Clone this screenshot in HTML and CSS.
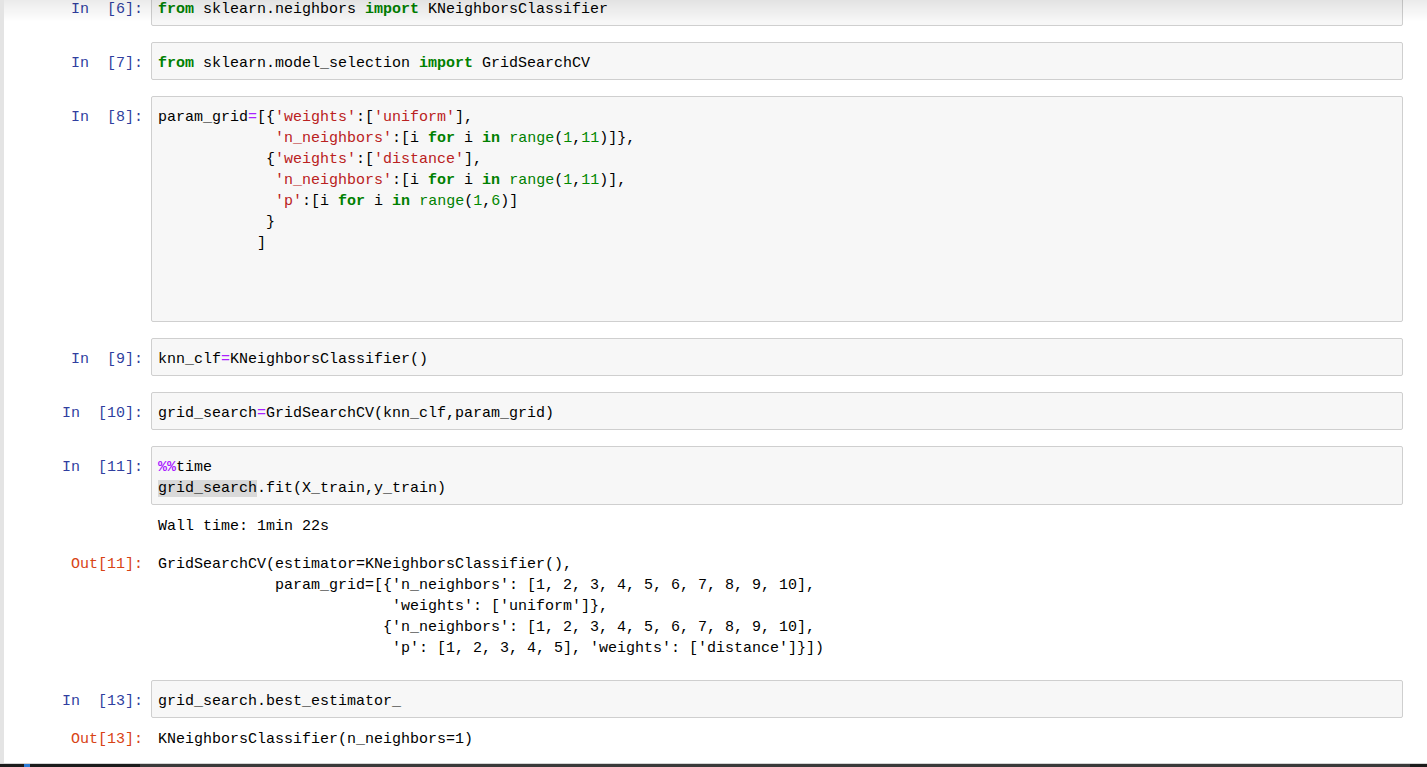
FILE: index.html
```html
<!DOCTYPE html>
<html lang="en">
<head>
    <meta charset="UTF-8">
    <title>knn grid search - Jupyter Notebook</title>
    <link rel="stylesheet" href="styles.css">
</head>
<body>
    <div class="notebook">
        <div class="cell first">
            <div class="row">
                <div class="prompt in">In  [6]:</div>
                <div class="input">
                    <pre class="line"><span class="kw">from</span> sklearn.neighbors <span class="kw">import</span> KNeighborsClassifier</pre>
                </div>
            </div>
        </div>

        <div class="cell">
            <div class="row">
                <div class="prompt in">In  [7]:</div>
                <div class="input">
                    <pre class="line"><span class="kw">from</span> sklearn.model_selection <span class="kw">import</span> GridSearchCV</pre>
                </div>
            </div>
        </div>

        <div class="cell">
            <div class="row">
                <div class="prompt in">In  [8]:</div>
                <div class="input tall">
                    <pre class="line">param_grid<span class="op">=</span>[{<span class="str">'weights'</span>:[<span class="str">'uniform'</span>],</pre>
                    <pre class="line">             <span class="str">'n_neighbors'</span>:[i <span class="kw">for</span> i <span class="kw">in</span> <span class="bi">range</span>(<span class="num">1</span>,<span class="num">11</span>)]},</pre>
                    <pre class="line">            {<span class="str">'weights'</span>:[<span class="str">'distance'</span>],</pre>
                    <pre class="line">             <span class="str">'n_neighbors'</span>:[i <span class="kw">for</span> i <span class="kw">in</span> <span class="bi">range</span>(<span class="num">1</span>,<span class="num">11</span>)],</pre>
                    <pre class="line">             <span class="str">'p'</span>:[i <span class="kw">for</span> i <span class="kw">in</span> <span class="bi">range</span>(<span class="num">1</span>,<span class="num">6</span>)]</pre>
                    <pre class="line">            }</pre>
                    <pre class="line">           ]</pre>
                    <pre class="line blank"></pre>
                    <pre class="line blank"></pre>
                    <pre class="line blank"></pre>
                </div>
            </div>
        </div>

        <div class="cell">
            <div class="row">
                <div class="prompt in">In  [9]:</div>
                <div class="input">
                    <pre class="line">knn_clf<span class="op">=</span>KNeighborsClassifier()</pre>
                </div>
            </div>
        </div>

        <div class="cell">
            <div class="row">
                <div class="prompt in">In  [10]:</div>
                <div class="input">
                    <pre class="line">grid_search<span class="op">=</span>GridSearchCV(knn_clf,param_grid)</pre>
                </div>
            </div>
        </div>

        <div class="cell with-output">
            <div class="row">
                <div class="prompt in">In  [11]:</div>
                <div class="input">
                    <pre class="line"><span class="magic">%%</span>time</pre>
                    <pre class="line"><span class="hl">grid_search</span>.fit(X_train,y_train)</pre>
                </div>
            </div>
            <div class="row output">
                <div class="prompt"></div>
                <div class="result">
                    <pre class="line">Wall time: 1min 22s</pre>
                </div>
            </div>
            <div class="row output next">
                <div class="prompt out">Out[11]:</div>
                <div class="result">
                    <pre class="line">GridSearchCV(estimator=KNeighborsClassifier(),</pre>
                    <pre class="line">             param_grid=[{'n_neighbors': [1, 2, 3, 4, 5, 6, 7, 8, 9, 10],</pre>
                    <pre class="line">                          'weights': ['uniform']},</pre>
                    <pre class="line">                         {'n_neighbors': [1, 2, 3, 4, 5, 6, 7, 8, 9, 10],</pre>
                    <pre class="line">                          'p': [1, 2, 3, 4, 5], 'weights': ['distance']}])</pre>
                </div>
            </div>
        </div>

        <div class="cell">
            <div class="row">
                <div class="prompt in">In  [13]:</div>
                <div class="input">
                    <pre class="line">grid_search.best_estimator_</pre>
                </div>
            </div>
            <div class="row output">
                <div class="prompt out">Out[13]:</div>
                <div class="result">
                    <pre class="line">KNeighborsClassifier(n_neighbors=1)</pre>
                </div>
            </div>
        </div>
    </div>

    <div class="header-shadow"></div>
    <div class="bottom-bar">
        <div class="thumb"></div>
        <div class="track"></div>
    </div>
</body>
</html>
```
FILE: styles.css
```css
html, body {
    margin: 0;
    height: 767px;
    overflow: hidden;
}
body {
    background-color: #ffffff;
    border-left: 4px solid #e4e4e4;
    font-family: "Liberation Mono", "DejaVu Sans Mono", monospace;
    font-size: 15px;
    line-height: 21px;
    color: #000;
}
pre {
    margin: 0;
    font: inherit;
    white-space: pre;
}
.line {
    height: 21px;
}
.notebook {
    padding-right: 24px;
}
.cell {
    margin-bottom: 16px;
}
.cell.first {
    margin-top: -12px;
}
.cell.with-output {
    margin-bottom: 21px;
}
.row {
    display: flex;
}
.prompt {
    flex: none;
    width: 139px;
    margin-right: 8px;
    text-align: right;
    white-space: pre;
}
.prompt.in {
    padding-top: 11px;
    color: #303f9f;
}
.prompt.out {
    color: #d84315;
}
.input {
    flex: 1;
    background-color: #f7f7f7;
    border: 1px solid #cfcfcf;
    border-radius: 2px;
    padding: 10px 6px 5px;
    overflow: hidden;
}
.input.tall {
    padding-bottom: 4px;
}
.output {
    padding-top: 11px;
}
.output.next {
    padding-top: 17px;
}
.result {
    padding-left: 7px;
}
.kw {
    color: #008000;
    font-weight: bold;
}
.bi {
    color: #008000;
}
.num {
    color: #008800;
}
.op {
    color: #aa22ff;
}
.str {
    color: #ba2121;
}
.magic {
    color: #aa22ff;
    font-weight: bold;
}
.hl {
    background-color: #d9d9d9;
}
.header-shadow {
    position: fixed;
    top: 0;
    left: 4px;
    right: 0;
    height: 22px;
    background: linear-gradient(rgba(0, 0, 0, 0.08), rgba(0, 0, 0, 0));
    pointer-events: none;
}
.bottom-bar {
    position: fixed;
    left: 0;
    right: 0;
    bottom: 0;
    height: 3px;
    background-color: #1b1b1b;
    border-top: 1px solid #d4d4d4;
    display: flex;
}
.thumb {
    margin-left: 24px;
    width: 6px;
    background-color: #2a7ad6;
}
.track {
    margin-left: 110px;
    width: 1270px;
    background-color: #3a3a3a;
}
```
